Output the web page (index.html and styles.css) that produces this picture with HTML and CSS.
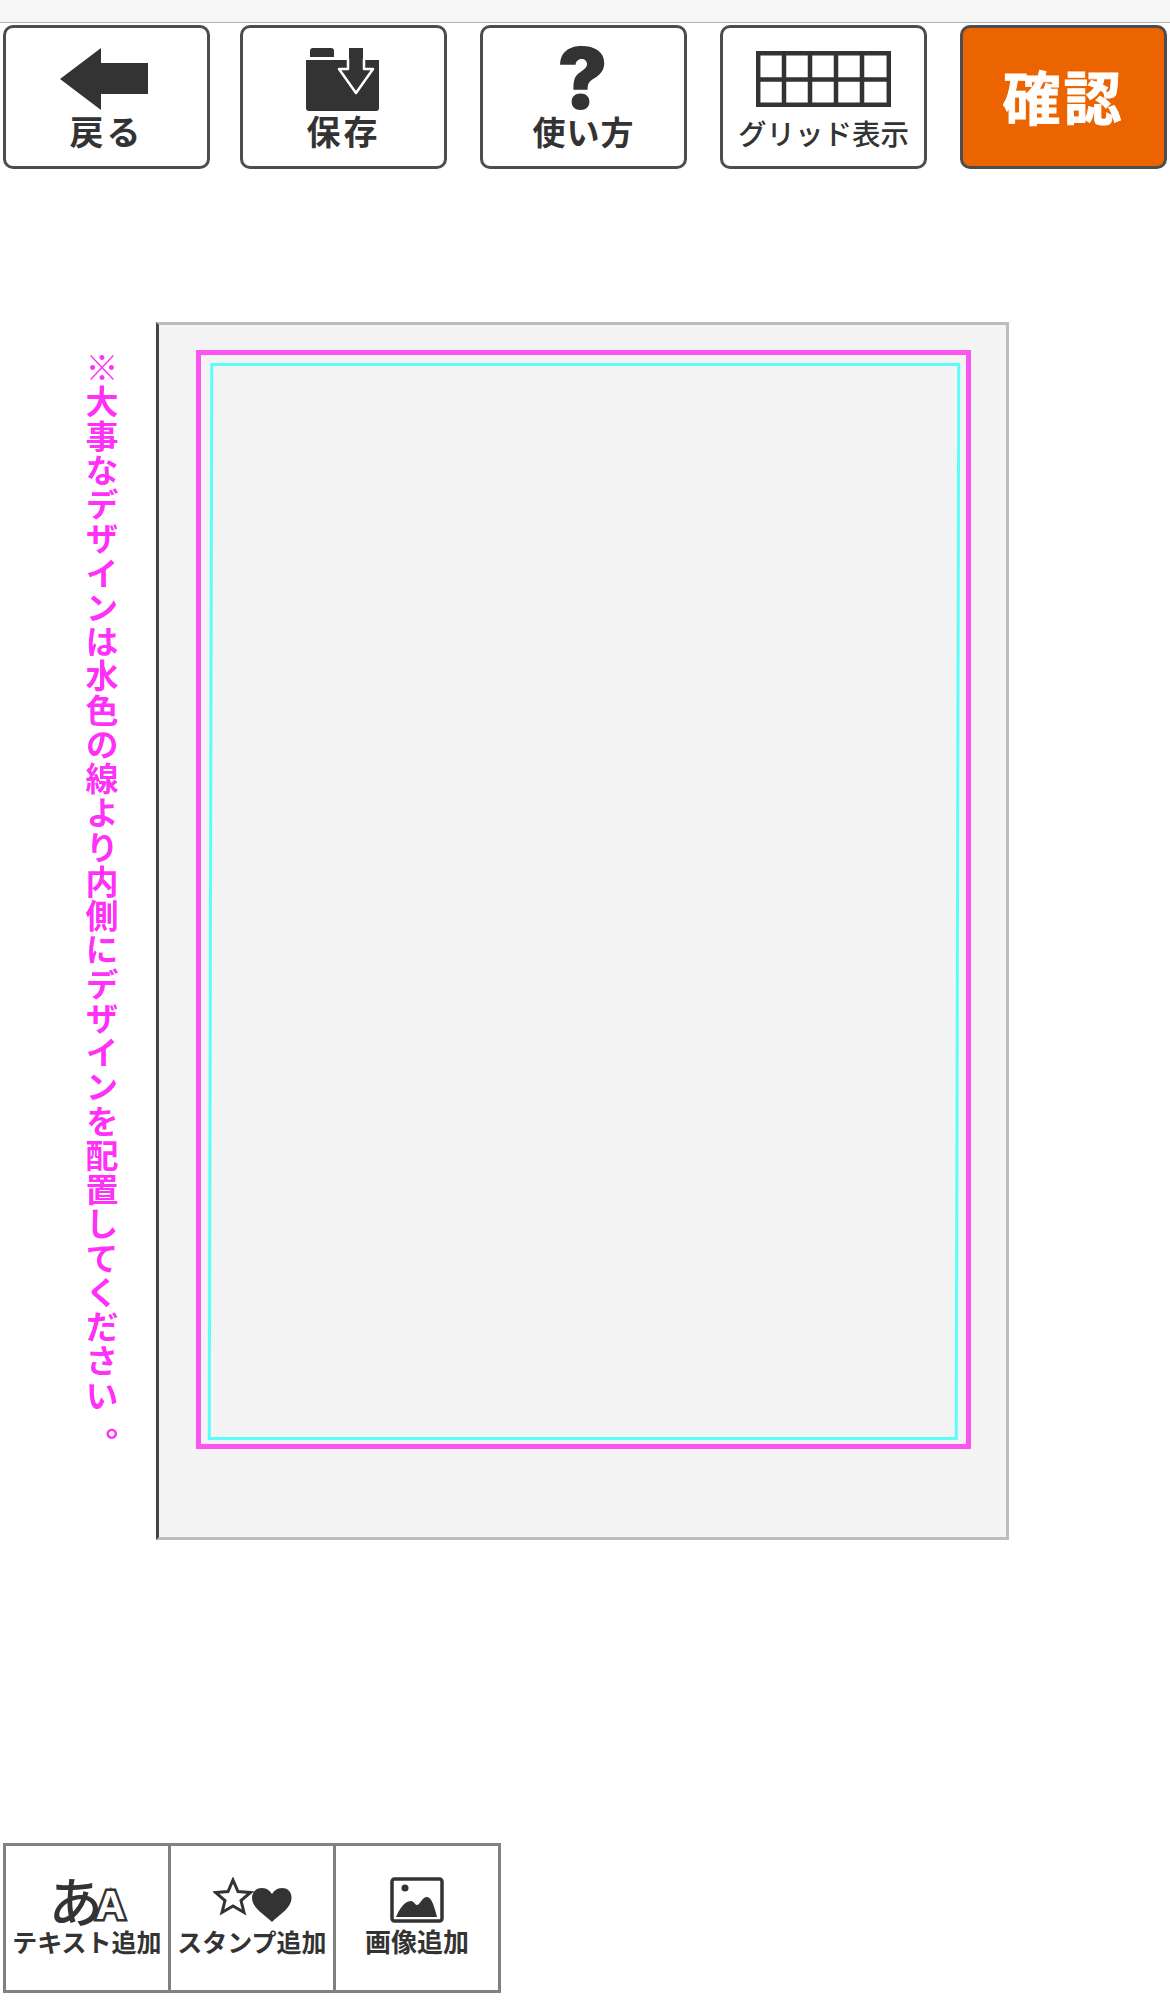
FILE: index.html
```html
<!DOCTYPE html>
<html lang="ja">
<head>
<meta charset="utf-8">
<title>デザイン編集</title>
<link rel="stylesheet" href="styles.css">
</head>
<body>
<div class="topbar"></div>
<nav class="toolbar">
  <a class="btn btn-back">
    <span class="icon icon-back"><svg width="88" height="62" viewBox="0 0 88 62"><path d="M0 31 41 0V15H88V46H41V62Z" fill="#333"/></svg></span>
    <span class="label label-spaced">戻る</span>
  </a>
  <a class="btn">
    <span class="icon icon-save"><svg width="74" height="63" viewBox="0 0 74 63">
      <path d="M4 9V3Q4 0 7 0H25Q28 0 28 3V9Z" fill="#333"/>
      <path d="M0 12H73V60Q73 63 70 63H3Q0 63 0 60Z" fill="#333"/>
      <path d="M42 0H58V21H67L50 45 33 21H42Z" fill="#333" stroke="#fff" stroke-width="2.5" stroke-linejoin="round"/>
      <path d="M43 0H57V11H43Z" fill="#333"/>
    </svg></span>
    <span class="label label-spaced">保存</span>
  </a>
  <a class="btn">
    <span class="icon"><span class="question">?</span></span>
    <span class="label">使い方</span>
  </a>
  <a class="btn">
    <span class="icon"><svg width="135" height="56" viewBox="0 0 135 56" fill="none" stroke="#333" stroke-width="4.5">
      <path d="M2.2 2.2H132.800V53.800H2.2ZM2.2 28.500H132.800M28 2.2V53.800M54 2.2V53.800M80 2.2V53.800M106 2.2V53.800"/>
    </svg></span>
    <span class="label label-small">グリッド表示</span>
  </a>
  <a class="btn btn-confirm"><span class="confirm">確認</span></a>
</nav>

<main class="stage">
  <p class="notice">※大事なデザインは水色の線より内側にデザインを配置してください<span class="maru">。</span></p>
  <div class="canvas">
    <div class="guide-bleed">
      <div class="guide-safe"></div>
    </div>
  </div>
</main>

<nav class="addbar">
  <a class="add">
    <span class="add-icon"><span class="glyph-a">あ</span><span class="glyph-b">A</span></span>
    <span class="add-label">テキスト追加</span>
  </a>
  <a class="add">
    <span class="add-icon"><svg width="79" height="46" viewBox="0 0 79 46">
      <path d="M20 3 25 14.5 37.5 15.5 28 23.5 31 35.5 20 29 9 35.5 12 23.5 2.5 15.5 15 14.5Z" fill="none" stroke="#333" stroke-width="3" stroke-linejoin="miter"/>
      <path d="M59 45C52 38 39 31 39 21C39 14 44 11 49 11C54 11 57 14 59 17C61 14 64 11 69 11C74 11 78.500 14 78.500 21C78.500 31 66 38 59 45Z" fill="#333"/>
    </svg></span>
    <span class="add-label">スタンプ追加</span>
  </a>
  <a class="add">
    <span class="add-icon"><svg width="54" height="46" viewBox="0 0 54 46">
      <rect x="2" y="2" width="50" height="42" rx="2.500" fill="none" stroke="#333" stroke-width="3.500"/>
      <circle cx="15" cy="11" r="3.500" fill="#333"/>
      <path d="M6 40C9 33 14 24 21 24C24 24 25 28 27 28C30 28 32 20 37 20C42 20 45 32 47 40Z" fill="#333"/>
    </svg></span>
    <span class="add-label add-label-wide">画像追加</span>
  </a>
</nav>
</body>
</html>
```

FILE: styles.css
```css
* { box-sizing: border-box; }

html, body {
  margin: 0;
  padding: 0;
  background: #fff;
}

body {
  width: 1170px;
  height: 2000px;
  overflow: hidden;
  font-family: "Noto Sans CJK JP", "Noto Sans", sans-serif;
  color: #333;
}

.topbar {
  height: 23px;
  background: #f6f6f6;
  border-bottom: 1px solid #b4b4b4;
}

.toolbar {
  display: flex;
  gap: 33px;
  margin: 2px 0 0 3px;
}

.btn {
  display: flex;
  flex-direction: column;
  align-items: center;
  width: 207px;
  height: 144px;
  padding-top: 20px;
  background: #fff;
  border: 3px solid #4d4d4d;
  border-radius: 10px;
}

.btn-back { margin-right: -3px; }

.icon {
  display: flex;
  align-items: center;
  justify-content: center;
  height: 62px;
}

.icon-back { padding-right: 5px; }
.icon-save { padding-right: 2px; }

.question {
  padding-right: 2px;
  font-family: Inter, "Liberation Sans", sans-serif;
  font-weight: 900;
  font-size: 85px;
  line-height: 62px;
  color: #333;
}

.label {
  margin-top: 1px;
  font-size: 33px;
  font-weight: 700;
  line-height: 40px;
  letter-spacing: 1px;
}

.label-spaced {
  font-size: 34px;
  letter-spacing: 3px;
}

.label-small {
  margin-top: 3px;
  font-size: 28.500px;
  font-weight: 500;
  letter-spacing: 0;
}

.btn-confirm {
  justify-content: center;
  padding: 0 0 5px;
  background: #eb6400;
}

.confirm {
  color: #fff;
  font-size: 58px;
  font-weight: 700;
  line-height: 1;
  letter-spacing: 3px;
  -webkit-text-stroke: 0.8px #fff;
}

.stage {
  display: flex;
  align-items: flex-start;
  margin-top: 153px;
  padding-left: 85px;
}

.notice {
  writing-mode: vertical-rl;
  margin: 29px 0 0;
  width: 33px;
  color: #ff30f8;
  font-size: 33px;
  font-weight: 700;
  line-height: 33px;
  letter-spacing: 1.250px;
  white-space: nowrap;
  filter: blur(0.6px);
}

.maru { margin-top: 14px; }

.canvas {
  margin-left: 38px;
  width: 853px;
  height: 1218px;
  padding: 25px 0 0 37px;
  background: #f4f4f4;
  border: 3px solid #bdbdbd;
  border-left-color: #444;
}

.guide-bleed {
  width: 775px;
  height: 1099px;
  padding: 8px 0 0 8px;
  border: 5px solid #fb55f2;
  filter: blur(0.5px);
}

.guide-safe {
  width: 750px;
  height: 1077px;
  border: 3.500px solid #5cfdfb;
  transform: skewX(-0.133deg);
}

.addbar {
  display: grid;
  grid-template-columns: 162px 165px 165px;
  width: 498px;
  height: 150px;
  margin: 303px 0 0 3px;
  border: 3px solid #808080;
}

.add {
  display: flex;
  flex-direction: column;
  align-items: center;
  padding-top: 31px;
  border-left: 3px solid #808080;
}

.add:first-child { border-left: 0; }

.add-icon {
  display: flex;
  align-items: flex-end;
  justify-content: center;
  height: 46px;
}

.glyph-a {
  font-size: 54px;
  font-weight: 500;
  line-height: 46px;
  color: #333;
}

.glyph-b {
  margin-left: -7px;
  font-family: "Liberation Sans", sans-serif;
  font-size: 41px;
  font-weight: 700;
  line-height: 36px;
  color: #fff;
  -webkit-text-stroke: 5px #333;
  paint-order: stroke fill;
}

.add-label {
  font-size: 25px;
  font-weight: 700;
  line-height: 36px;
  white-space: nowrap;
}

.add-label-wide { font-size: 26px; }
```
